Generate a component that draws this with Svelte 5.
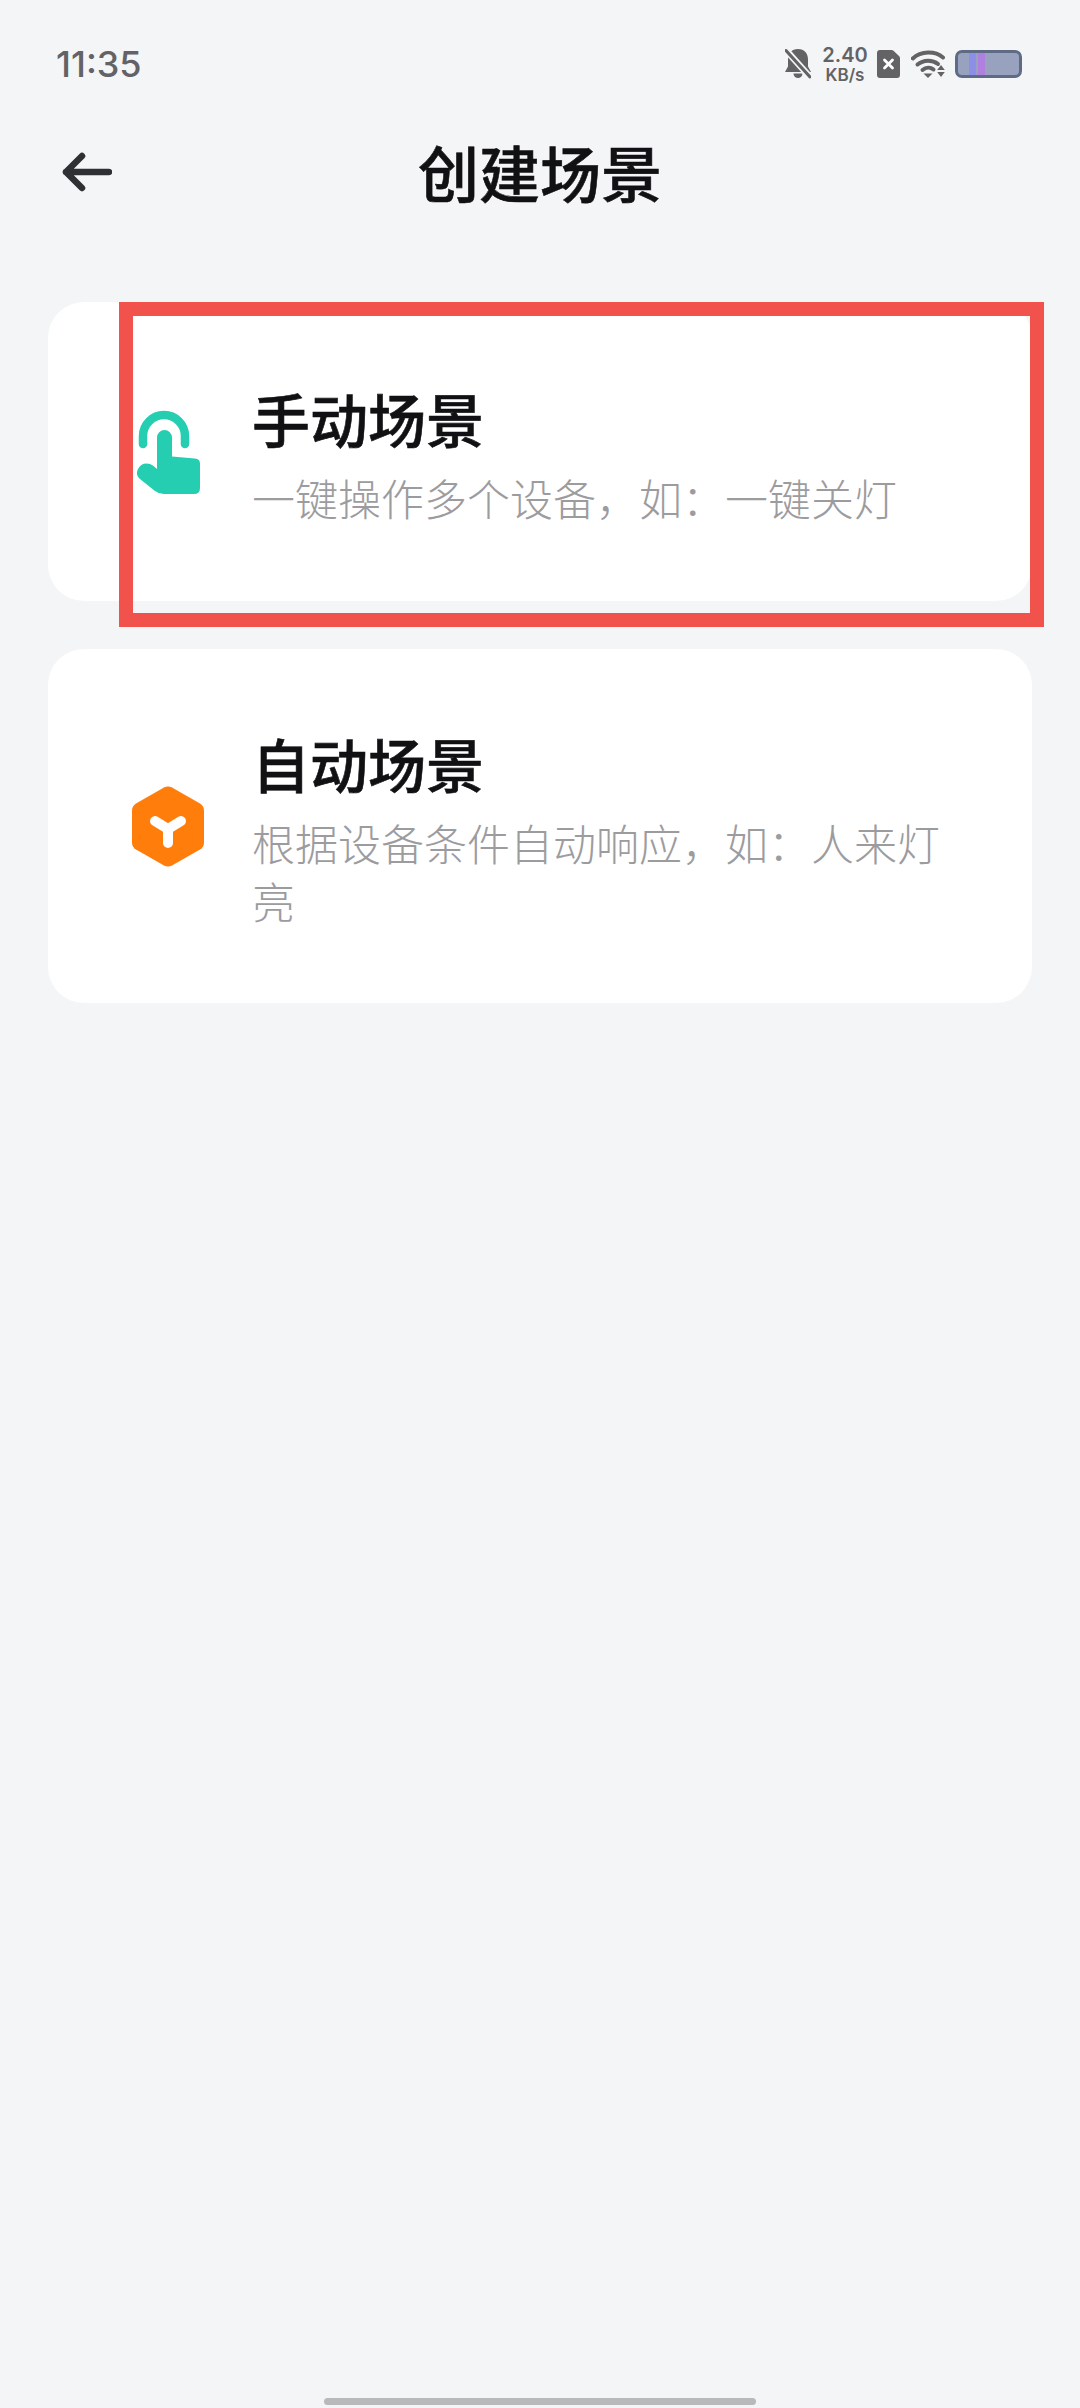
<script lang="ts">
  const scenes = [
    { id: 'manual', title: '手动场景', desc: '一键操作多个设备，如：一键关灯' },
    { id: 'auto', title: '自动场景', desc: '根据设备条件自动响应，如：人来灯亮' }
  ];
</script>

<div class="page">
  <div class="status">
    <span class="time">11:35</span>
    <div class="icons">
      <svg class="bell" viewBox="0 0 26 30" width="26" height="30">
        <path d="M13 0c6.500 0 10 4.500 10 10.500v7l3 5.500H0l3-5.500v-7C3 4.500 6.500 0 13 0z" fill="#636366" />
        <path d="M8.500 24.500h9a4.500 4.500 0 0 1-9 0z" fill="#636366" />
        <path d="M0 0l25 28" stroke="#f3f5f7" stroke-width="6.500" />
        <path d="M1 1.500l24 26.500" stroke="#636366" stroke-width="3" stroke-linecap="round" />
      </svg>
      <div class="speed"><span class="num">2.40</span><span class="unit">KB/s</span></div>
      <svg class="sim" viewBox="0 0 23 28" width="23" height="28">
        <path d="M3 0h11.500a3 3 0 0 1 2 .8L22 6a3 3 0 0 1 1 2.200V25a3 3 0 0 1-3 3H3a3 3 0 0 1-3-3V3a3 3 0 0 1 3-3z" fill="#636366" />
        <path d="M7.500 10l8 8M15.500 10l-8 8" stroke="#fff" stroke-width="2.800" stroke-linecap="round" />
      </svg>
      <svg class="wifi" viewBox="0 0 35 28" width="35" height="28">
        <path d="M1.800 8.500C10 .8 24 .8 32 7.500" fill="none" stroke="#636366" stroke-width="4" stroke-linecap="round" />
        <path d="M6.500 14.500c6-5 15-5 20.500-.5" fill="none" stroke="#636366" stroke-width="4" stroke-linecap="round" />
        <path d="M11.500 20c3.500-3 8-3 11-.5" fill="none" stroke="#636366" stroke-width="4" stroke-linecap="round" />
        <path d="M12.500 23.500h9l-4.500 4.500z" fill="#636366" />
        <path d="M30 15l3.800 5h-7.600zM26.200 22h7.600L30 27z" fill="#636366" />
      </svg>
      <div class="battery">
        <span class="cell blue"></span>
        <span class="cell violet"></span>
      </div>
    </div>
  </div>

  <header>
    <button class="back" aria-label="返回">
      <svg viewBox="0 0 50 40" width="50" height="40">
        <path d="M4 20h43M20 4L4 20l16 16" fill="none" stroke="#2f3033" stroke-width="6.500" stroke-linecap="round" stroke-linejoin="round" />
      </svg>
    </button>
    <h1>创建场景</h1>
  </header>

  <div class="list">
    {#each scenes as s}
      <div class="card">
        <div class="icon">
          {#if s.id === 'manual'}
            <svg class="hand" viewBox="137 410 63 85" width="63" height="85">
              <path d="M143 444v-8a21 21 0 0 1 42 0v8" fill="none" stroke="#26ceb1" stroke-width="8.500" stroke-linecap="round" />
              <path d="M157 437.500a7.500 7.500 0 0 1 15 0V456.500L195 458.500q5 .5 5 5V488q0 6-6 6H164q-5 0-9-3L140 479q-5-4-2-10q4-7 12-5q3 1 7 5z" fill="#26ceb1" />
            </svg>
          {:else}
            <svg viewBox="132 785 72 82" width="72" height="82">
              <path d="M164 786.500q4-2 8 0l28 16q4 2.500 4 7v32q0 4.500-4 7l-28 16q-4 2-8 0l-28-16q-4-2.500-4-7v-32q0-4.500 4-7z" fill="#ff7d0a" />
              <path d="M155 820l13 8l13-8M168 828v14" fill="none" stroke="#fff" stroke-width="10" stroke-linecap="round" stroke-linejoin="round" />
            </svg>
          {/if}
        </div>
        <div class="text">
          <div class="title">{s.title}</div>
          <div class="desc">{s.desc}</div>
        </div>
      </div>
    {/each}
  </div>

  <div class="highlight"></div>
  <div class="home-bar"></div>
</div>

<style>
  :global(body) {
    background: #f3f5f7;
  }
  .page {
    position: relative;
    height: 2408px;
    overflow: hidden;
    background: #f3f5f7;
    font-family: "Noto Sans CJK SC", "Noto Sans", sans-serif;
  }
  .status {
    height: 128px;
    box-sizing: border-box;
    padding: 0 58px 0 56px;
    display: flex;
    justify-content: space-between;
    align-items: center;
  }
  .time {
    font-family: Inter, sans-serif;
    font-size: 36px;
    font-weight: 500;
    color: #636366;
  }
  .icons {
    display: flex;
    align-items: center;
  }
  .bell { margin-right: 11px; }
  .speed {
    display: flex;
    flex-direction: column;
    align-items: center;
    width: 46px;
    margin-right: 9px;
    font-family: Inter, sans-serif;
    font-weight: 600;
    color: #636366;
  }
  .num { font-size: 20px; line-height: 22px; }
  .unit { font-size: 17px; line-height: 18px; }
  .sim { margin-right: 11px; }
  .wifi { margin-right: 9px; }
  .battery {
    width: 67px;
    height: 28px;
    box-sizing: border-box;
    border: 3px solid #5f6a85;
    border-radius: 7px;
    background: #98a2bf;
    display: flex;
    padding-left: 11px;
    gap: 2px;
  }
  .cell { width: 7px; }
  .blue { background: #8b90e6; }
  .violet { background: #b080e0; }

  header {
    position: relative;
    height: 88px;
    display: flex;
    align-items: center;
    justify-content: center;
  }
  .back {
    position: absolute;
    left: 62px;
    top: 24px;
    padding: 0;
    border: 0;
    background: none;
    line-height: 0;
  }
  h1 {
    margin: 0;
    font-size: 61px;
    font-weight: 500;
    -webkit-text-stroke: 0.6px #111114;
    color: #111114;
    line-height: 88px;
  }
  .list {
    margin: 86px 48px 0;
    display: flex;
    flex-direction: column;
    gap: 48px;
  }
  .card {
    box-sizing: border-box;
    min-height: 299px;
    background: #fff;
    border-radius: 36px;
    display: flex;
    align-items: center;
    padding: 76px 60px 74px 84px;
  }
  .icon {
    width: 120px;
    flex: none;
    display: flex;
    line-height: 0;
  }
  .hand { margin-left: 5px; }
  .title {
    font-size: 58px;
    font-weight: 500;
    -webkit-text-stroke: 0.6px #111114;
    line-height: 76px;
    color: #111114;
  }
  .desc {
    margin-top: 12px;
    font-size: 43px;
    font-weight: 300;
    line-height: 58px;
    color: #9c9c9f;
  }
  .highlight {
    position: absolute;
    left: 119px;
    top: 302px;
    width: 925px;
    height: 325px;
    box-sizing: border-box;
    border: 14px solid #f2524c;
  }
  .home-bar {
    position: absolute;
    left: 324px;
    top: 2398px;
    width: 432px;
    height: 7px;
    border-radius: 4px;
    background: #b9b9bb;
  }
</style>
